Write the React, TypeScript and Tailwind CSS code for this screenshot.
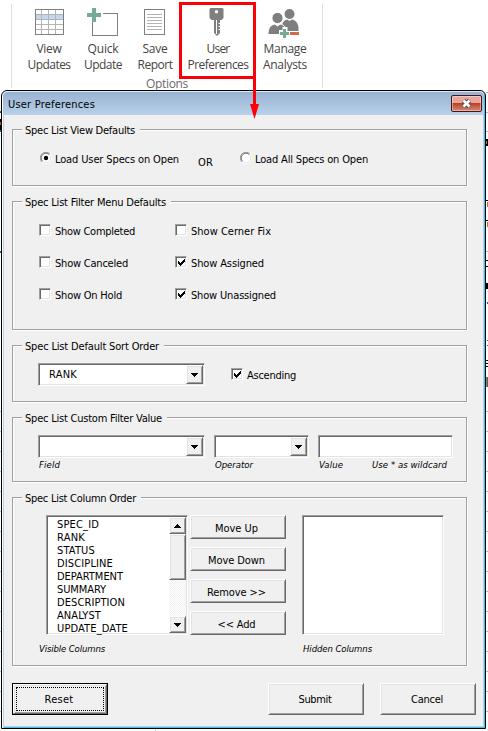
import React, { useLayoutEffect, useRef, useState } from "react";

/* Text whose tracking is adjusted so that it spans `w` pixels. */
function Fit({ w, className = "", children }: { w: number; className?: string; children: string }) {
  const ref = useRef<HTMLSpanElement>(null);
  const [spacing, setSpacing] = useState(0);
  useLayoutEffect(() => {
    if (ref.current) {
      const natural = ref.current.getBoundingClientRect().width;
      setSpacing((s) => s + (w - natural) / children.length);
    }
  }, [w, children]);
  return (
    <span ref={ref} className={`inline-block whitespace-pre ${className}`} style={{ letterSpacing: `${spacing}px` }}>
      {children}
    </span>
  );
}

const SUNKEN =
  "border border-t-[#a0a0a0] border-l-[#a0a0a0] border-r-white border-b-white bg-white shadow-[inset_1px_1px_0_#696969,inset_-1px_-1px_0_#e3e3e3]";
const RAISED =
  "border border-t-white border-l-white border-r-[#696969] border-b-[#696969] bg-[#f0f0f0] shadow-[inset_1px_1px_0_#e3e3e3,inset_-1px_-1px_0_#a0a0a0]";

function Group({ title, w, className, children }: { title: string; w: number; className: string; children: React.ReactNode }) {
  return (
    <section className={`flex w-[455px] flex-col border border-[#a0a0a0] shadow-[1px_1px_0_#fff,inset_1px_1px_0_#fff] ${className}`}>
      <h2 className="-mt-[6px] ml-[9px] h-[13px] self-start bg-[#f0f0f0] pr-[5px] pl-[3px]">
        <Fit w={w}>{title}</Fit>
      </h2>
      {children}
    </section>
  );
}

function Radio({ label, w, on = false }: { label: string; w: number; on?: boolean }) {
  return (
    <label className="flex h-[13px]">
      <svg width="12" height="12" viewBox="0 0 12 12" className="-mt-px mr-[3px] shrink-0">
        <circle cx="6" cy="6" r="5" fill="#fff" />
        <path d="M1.9 10A5.5 5.5 0 0 1 10 1.9" fill="none" stroke="#a0a0a0" />
        <path d="M2.6 9.2A4.6 4.6 0 0 1 9.2 2.6" fill="none" stroke="#696969" />
        <path d="M10 1.9A5.5 5.5 0 0 1 1.9 10" fill="none" stroke="#fff" />
        <path d="M9.4 2.8A4.6 4.6 0 0 1 2.8 9.4" fill="none" stroke="#e3e3e3" />
        {on && <circle cx="6" cy="6" r="2.200" fill="#000" />}
      </svg>
      <Fit w={w}>{label}</Fit>
    </label>
  );
}

function Check({ label, w, on = false, className = "" }: { label: string; w: number; on?: boolean; className?: string }) {
  return (
    <label className={`flex h-[13px] ${className}`}>
      <span className={`-mt-px mr-[4px] h-[12px] w-[12px] shrink-0 ${SUNKEN}`}>
        {on && (
          <svg width="10" height="10" viewBox="0 0 10 10" shapeRendering="crispEdges">
            <path d="M2 4h1v1h1v1h1v-1h1v-1h1v-1h1v-1h1v3h-1v1h-1v1h-1v1h-1v1h-1v-1h-1v-1h-1z" fill="#000" />
          </svg>
        )}
      </span>
      <Fit w={w}>{label}</Fit>
    </label>
  );
}

function Arrow({ up = false }: { up?: boolean }) {
  return (
    <svg width="7" height="4" viewBox="0 0 7 4" shapeRendering="crispEdges">
      <path d={up ? "M3 0h1v1h1v1h1v1h1v1H0V3h1V2h1V1h1z" : "M0 0h7v1H6v1H5v1H4v1H3V3H2V2H1V1H0z"} fill="#000" />
    </svg>
  );
}

function Combo({ className, children }: { className: string; children?: React.ReactNode }) {
  return (
    <div className={`flex h-[23px] p-px ${SUNKEN} ${className}`}>
      <div className="flex-1 pt-[3px] pl-[9px]">{children}</div>
      <div className={`flex w-[17px] items-center justify-center ${RAISED}`}>
        <Arrow />
      </div>
    </div>
  );
}

function Btn({ w, className, children }: { w: number; className: string; children: string }) {
  return (
    <button className={`flex w-[96px] items-center justify-center ${RAISED} ${className}`}>
      <Fit w={w}>{children}</Fit>
    </button>
  );
}

const COLUMNS: [string, number][] = [
  ["SPEC_ID", 42],
  ["RANK", 28],
  ["STATUS", 38],
  ["DISCIPLINE", 56],
  ["DEPARTMENT", 66],
  ["SUMMARY", 49],
  ["DESCRIPTION", 68],
  ["ANALYST", 44],
  ["UPDATE_DATE", 71],
];

function RibbonItem({ className, icon, a, aw, b, bw }: { className: string; icon: React.ReactNode; a: string; aw: number; b: string; bw: number }) {
  return (
    <div className={`flex flex-col items-center ${className}`}>
      <div className="flex h-[41px] items-start">{icon}</div>
      <div className="h-[16px]"><Fit w={aw}>{a}</Fit></div>
      <div className="h-[16px]"><Fit w={bw}>{b}</Fit></div>
    </div>
  );
}

const TableIcon = (
  <svg width="30" height="41" viewBox="0 0 30 41" shapeRendering="crispEdges">
    <rect x="1" y="9" width="28" height="26" fill="#fff" />
    <rect x="1" y="15" width="28" height="5" fill="#c5d7ec" />
    <path d="M7.500 9v26M14.500 9v26M21.500 9v26M1 14.500h28M1 19.500h28M1 24.500h28M1 29.500h28" stroke="#b3b3b3" />
    <rect x="1" y="9.500" width="28" height="25" fill="none" stroke="#7f7f7f" />
  </svg>
);
const AddIcon = (
  <svg width="32" height="41" viewBox="0 0 32 41" shapeRendering="crispEdges">
    <path d="M16 13.500H30.500V35.500H5.500V22" fill="none" stroke="#7f7f7f" />
    <path d="M5 8h4v5h5v4H9v5H5v-5H0v-4h5z" fill="#77a997" />
  </svg>
);
const ReportIcon = (
  <svg width="22" height="41" viewBox="0 0 22 41" shapeRendering="crispEdges">
    <rect x="0.500" y="9.500" width="20" height="25" fill="#fff" stroke="#7f7f7f" />
    <path d="M3 14.500h15M3 17.500h15M3 20.500h15M3 23.500h15M3 26.500h15M3 29.500h15" stroke="#b3b3b3" />
  </svg>
);
const KeyIcon = (
  <svg width="15" height="41" viewBox="0 0 15 41" className="mr-[4px]">
    <path fillRule="evenodd" d="M1.500 8h12l1 1v9l-2 2H11v13l-3 3-3-3V20H2.500l-2-2V9zM7.500 10a1.700 1.700 0 1 0 0 3.400 1.700 1.700 0 0 0 0-3.400z" fill="#7f7f7f" />
    <path d="M7.500 20v14" stroke="#fff" />
    <path d="M11 23.500h-1.500M11 26.500h-1.500M11 29.500h-1.500" stroke="#fff" />
  </svg>
);
const PeopleIcon = (
  <svg width="32" height="41" viewBox="0 0 32 41" className="mr-[3px]">
    <g fill="#7f7f7f">
      <circle cx="21.500" cy="14" r="5" />
      <path d="M14 25c1-4 3-5 5-5.500l2.500 1.500 2.500-1.500c4 .5 6 4 6.500 8V31H14z" />
    </g>
    <g fill="#7f7f7f" stroke="#fff">
      <circle cx="9.500" cy="18" r="5.600" />
      <path d="M0 34.500c0-6 2-9.500 7-10.500l2.500 2 2.500-2c5 1 7 4.500 7 10.500z" />
    </g>
    <path d="M14.500 27h5v4H32v7H11v-8h3.500z" fill="#fff" />
    <g shapeRendering="crispEdges">
      <path d="M15 29h3v3h3v3h-3v3h-3v-3h-3v-3h3z" fill="#77a997" />
      <path d="M22 32h9v3h-9z" fill="#d6694d" />
    </g>
  </svg>
);

/* Slivers of the worksheet that show on either side of the dialog. */
const LEFT_LINES = [411, 431, 451, 471, 491, 511, 531, 551, 571, 591, 611, 631, 651, 671, 691, 711];
const RIGHT_LINES = [92, 112, 131, 251, ...LEFT_LINES];
const SheetLeft = (
  <svg width="1" height="639" viewBox="0 90 1 639" className="shrink-0" shapeRendering="crispEdges">
    {LEFT_LINES.map((y) => <rect key={y} y={y} width="1" height="1" fill="#c0c0c0" />)}
    <rect y="111" width="1" height="2" fill="#217346" />
    <rect y="119" width="1" height="11" fill="#000" />
    <rect y="122" width="1" height="3" fill="#c55a11" />
    <rect y="130" width="1" height="2" fill="#217346" />
    <rect y="251" width="1" height="2" fill="#217346" />
  </svg>
);
const SheetRight = (
  <svg width="2" height="639" viewBox="0 90 2 639" className="shrink-0" shapeRendering="crispEdges">
    {RIGHT_LINES.map((y) => <rect key={y} y={y} width="2" height="1" fill="#b4b4b4" />)}
    <path d="M0 139h2v7H0zM0 200h2v1H0zM0 220h2v1H0zM0 260h2v1H0zM0 266h2v1H0zM0 283h2v6H0zM0 360h2v1H0zM0 363h2v1H0zM0 366h2v1H0z" fill="#000" />
    <path d="M0 141h1v3H0zM1 202h1v5H1zM1 222h1v5H1zM0 377h1v10H0z" fill="#c0701c" />
    <path d="M1 377h1v10H1z" fill="#1f6f9f" />
    <path d="M1 302h1v2H1zM1 340h1v1H1zM1 345h1v1H1z" fill="#3a4fb0" />
  </svg>
);

export default function App() {
  return (
    <div className="relative flex h-[731px] w-[488px] flex-col overflow-hidden bg-white font-['DejaVu_Sans_Condensed','DejaVu_Sans',sans-serif] text-[11px] leading-[13px] text-black [font-stretch:condensed]">
      <header className="flex h-[90px] shrink-0 pt-[4px] pl-[11px] font-['Open_Sans','Noto_Sans',sans-serif] text-[12px] leading-[16px] text-[#444] [font-stretch:normal]">
        <div className="flex h-[84px] w-[312px] flex-col border-x border-[#e1e1e1]">
          <div className="-mt-[4px] flex h-[76px]">
            <RibbonItem className="ml-[12px] w-[50px]" icon={TableIcon} a="View" aw={25} b="Updates" bw={43} />
            <RibbonItem className="ml-[5px] w-[48px]" icon={AddIcon} a="Quick" aw={31} b="Update" bw={38} />
            <RibbonItem className="ml-[3px] w-[50px]" icon={ReportIcon} a="Save" aw={25} b="Report" bw={35} />
            <RibbonItem className="ml-[7px] w-[62px]" icon={KeyIcon} a="User" aw={23} b="Preferences" bw={61} />
            <RibbonItem className="ml-[10px] w-[52px]" icon={PeopleIcon} a="Manage" aw={43} b="Analysts" bw={44} />
          </div>
          <div className="h-[12px] text-center text-[#6a6a6a]"><Fit w={42}>Options</Fit></div>
        </div>
      </header>

      <div className="flex h-[639px] shrink-0">
        {SheetLeft}
        <main className="flex w-[485px] shrink-0 flex-col rounded-t-[6px] border border-black bg-[#f0f0f0] shadow-[inset_1px_0_0_#fff,inset_2px_0_0_#b9d1ea,inset_-1px_-1px_0_#34c4ee,inset_-2px_-2px_0_#b9d1ea]">
          <div className="mx-px flex h-[24px] shrink-0 justify-between rounded-t-[5px] border-t border-[#dce8f4] bg-linear-to-b from-[#98b3d1] to-[#b9d1ea] pl-[5px]">
            <h1 className="pt-[6px]"><Fit w={87}>User Preferences</Fit></h1>
            <button className="mt-[3px] mr-[2px] flex h-[17px] w-[31px] items-center justify-center rounded-[2px] border border-[#431422] bg-linear-to-b from-[#e8a69b] from-45% via-[#bb4027] via-50% to-[#d58872] shadow-[inset_0_0_0_1px_#ffffff66]">
              <svg width="13" height="11" viewBox="0 0 13 11">
                <path d="M3.500 2.500l6 6M9.500 2.500l-6 6" stroke="#535666" strokeWidth="4.600" />
                <path d="M3.500 2.500l6 6M9.500 2.500l-6 6" stroke="#fff" strokeWidth="2.600" />
              </svg>
            </button>
          </div>

          <div className="flex flex-col gap-[15px] pt-[14px] pl-[10px]">
            <Group title="Spec List View Defaults" w={110} className="h-[57px]">
              <div className="mt-[16px] flex pl-[27px]">
                <Radio label="Load User Specs on Open" w={124} on />
                <span className="mt-[3px] ml-[19px] w-[42px]"><Fit w={15}>OR</Fit></span>
                <Radio label="Load All Specs on Open" w={113} />
              </div>
            </Group>

            <Group title="Spec List Filter Menu Defaults" w={141} className="h-[129px]">
              <div className="mt-[16px] grid grid-cols-[136px_120px] gap-y-[19px] pl-[26px]">
                <Check label="Show Completed" w={80} />
                <Check label="Show Cerner Fix" w={80} />
                <Check label="Show Canceled" w={73} />
                <Check label="Show Assigned" w={73} on />
                <Check label="Show On Hold" w={67} />
                <Check label="Show Unassigned" w={85} on />
              </div>
            </Group>

            <Group title="Spec List Default Sort Order" w={134} className="h-[57px]">
              <div className="mt-[10px] flex pl-[25px]">
                <Combo className="w-[167px]"><Fit w={28}>RANK</Fit></Combo>
                <Check label="Ascending" w={49} on className="mt-[6px] ml-[26px]" />
              </div>
            </Group>

            <Group title="Spec List Custom Filter Value" w={137} className="h-[65px]">
              <div className="mt-[10px] flex pl-[25px]">
                <Combo className="w-[167px]" />
                <Combo className="ml-[9px] w-[95px]" />
                <div className={`ml-[9px] h-[23px] w-[135px] ${SUNKEN}`} />
              </div>
              <div className="mt-px flex pl-[26px] text-[9.500px] leading-[12px] italic">
                <span className="w-[176px]"><Fit w={21}>Field</Fit></span>
                <span className="w-[104px]"><Fit w={38}>Operator</Fit></span>
                <span className="w-[53px]"><Fit w={24}>Value</Fit></span>
                <Fit w={75}>Use * as wildcard</Fit>
              </div>
            </Group>

            <Group title="Spec List Column Order" w={111} className="h-[169px]">
              <div className="mt-[10px] flex pl-[33px]">
                <div className={`flex h-[120px] w-[142px] p-px ${SUNKEN}`}>
                  <ul className="flex-1 pl-[9px]">
                    {COLUMNS.map(([name, w]) => (
                      <li key={name} className="h-[13px] pt-px"><Fit w={w}>{name}</Fit></li>
                    ))}
                  </ul>
                  <div className="flex w-[17px] flex-col bg-[repeating-conic-gradient(#fff_0_25%,#f0f0f0_0_50%)] bg-size-[2px_2px]">
                    <div className={`flex h-[17px] items-center justify-center ${RAISED}`}><Arrow up /></div>
                    <div className={`h-[46px] ${RAISED}`} />
                    <div className={`mt-auto flex h-[17px] items-center justify-center ${RAISED}`}><Arrow /></div>
                  </div>
                </div>
                <div className="ml-[2px] flex flex-col gap-[8px]">
                  <Btn w={43} className="h-[24px] pt-[2px] pr-[3px]">Move Up</Btn>
                  <Btn w={57} className="h-[24px] pt-[2px] pr-[3px]">Move Down</Btn>
                  <Btn w={59} className="h-[24px] pt-[2px] pr-[3px]">{"Remove >>"}</Btn>
                  <Btn w={38} className="h-[24px] pt-[2px] pr-[3px]">{"<< Add"}</Btn>
                </div>
                <div className={`ml-[16px] h-[120px] w-[142px] ${SUNKEN}`} />
              </div>
              <div className="mt-[8px] flex pl-[26px] text-[9.500px] leading-[12px] italic">
                <span className="w-[264px]"><Fit w={66}>Visible Columns</Fit></span>
                <Fit w={69}>Hidden Columns</Fit>
              </div>
            </Group>
          </div>

          <div className="mt-[17px] flex pl-[10px]">
            <div className="h-[32px] w-[96px] border border-black">
              <button className={`flex h-full w-full p-[2px] ${RAISED}`}>
                <span className="flex h-full w-full items-center justify-center border border-dotted border-black pr-[2px]"><Fit w={29}>Reset</Fit></span>
              </button>
            </div>
            <Btn w={33} className="ml-[160px] h-[32px] pr-[2px]">Submit</Btn>
            <Btn w={32} className="ml-[16px] h-[32px] pr-[2px]">Cancel</Btn>
          </div>
        </main>
        {SheetRight}
      </div>
      <div className="flex-1 pl-[155px]"><div className="h-full w-px bg-[#c8c8c8]" /></div>

      {/* Callout drawn over the ribbon and the title bar */}
      <svg className="pointer-events-none absolute top-0 left-[176px]" width="90" height="122" viewBox="0 0 90 122">
        <rect x="4.500" y="3.500" width="74" height="74" fill="none" stroke="#fb0007" strokeWidth="3" />
        <path d="M78.500 77v29" stroke="#fb0007" strokeWidth="3" />
        <path d="M74 104h9l-4.500 15z" fill="#fb0007" />
      </svg>
    </div>
  );
}
